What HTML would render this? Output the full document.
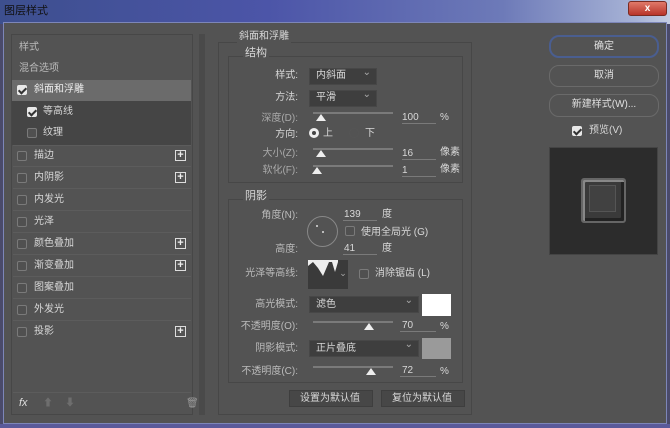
<!DOCTYPE html>
<html><head><meta charset="utf-8"><style>
*{box-sizing:border-box;margin:0;padding:0}
body{width:670px;height:428px;overflow:hidden;background:#4a4a6a;font-family:"Liberation Sans","Noto Sans CJK SC",sans-serif;font-size:10px;color:#d8d8d8;position:relative}
.a{position:absolute}
.t{position:absolute;white-space:nowrap;line-height:12px}
.r{text-align:right}
.cb{position:absolute;width:10px;height:10px;border:1px solid #7a7a7a;border-radius:2px;background:#505050}
.cb.on{background:#e8e8e8;border-color:#e8e8e8}
.cb.on::after{content:"";position:absolute;left:2px;top:0px;width:3px;height:6px;border:solid #333;border-width:0 2px 2px 0;transform:rotate(45deg)}
.plus{position:absolute;width:11px;height:11px;border:1px solid #ddd;color:#eee;font-size:11px;line-height:9px;text-align:center;font-weight:bold}
.sel{position:absolute;height:17px;background:#3e3e3e;border:1px solid #474747}
.sel::after{content:"⌄";position:absolute;right:5px;top:-2px;color:#aaa;font-size:10px}
.sl{position:absolute;height:2px;background:#7a7a7a}
.th{position:absolute;width:0;height:0;border-left:5px solid transparent;border-right:5px solid transparent;border-bottom:7px solid #eee}
.in{position:absolute;height:1px;background:#7a7a7a}
.btn{position:absolute;border:1px solid #6a6a6a;border-radius:10px;text-align:center;line-height:20px;color:#e0e0e0}
.box{position:absolute;border:1px solid #474747}
.row{position:absolute;left:13px;width:178px;height:1px;background:#5c5c5c}
</style></head><body>
<div class="a" style="left:0;top:0;width:670px;height:24px;background:linear-gradient(90deg,#3d4f8e 0%,#4c55a8 40%,#6d7ab8 75%,#a7b3d6 95%,#c5cde2 100%)"></div>
<div class="t" style="left:4px;top:5px;color:#111;font-size:11px">图层样式</div>
<div class="a" style="left:628px;top:1px;width:39px;height:15px;background:linear-gradient(#e07a6a,#b8342a);border:1px solid #7a2b22;border-radius:3px;color:#fff;text-align:center;font-size:10px;line-height:13px;font-weight:bold">x</div>
<div class="a" style="left:3px;top:22px;width:664px;height:402px;background:#535353;border:1px solid #7d86b8"></div>
<div class="a" style="left:0;top:424px;width:670px;height:4px;background:#5a5a9a"></div>

<!-- left panel -->
<div class="a" style="left:11px;top:34px;width:182px;height:381px;border:1px solid #474747;background:#535353"></div>
<div class="a" style="left:12px;top:80px;width:179px;height:21px;background:#6b6b6b"></div>
<div class="a" style="left:12px;top:101px;width:179px;height:44px;background:#454545"></div>
<div class="t" style="left:19px;top:42px;color:#bbb">样式</div>
<div class="t" style="left:19px;top:63px;color:#bbb">混合选项</div>
<div class="cb on" style="left:17px;top:85px"></div><div class="t" style="left:34px;top:84px;color:#eee">斜面和浮雕</div>
<div class="cb on" style="left:27px;top:107px"></div><div class="t" style="left:43px;top:106px">等高线</div>
<div class="cb" style="left:27px;top:128px"></div><div class="t" style="left:43px;top:127px">纹理</div>
<div class="cb" style="left:17px;top:151px"></div><div class="t" style="left:34px;top:150px">描边</div><div class="plus" style="left:175px;top:150px">+</div>
<div class="row" style="top:145px"></div><div class="row" style="top:166px"></div>
<div class="cb" style="left:17px;top:173px"></div><div class="t" style="left:34px;top:172px">内阴影</div><div class="plus" style="left:175px;top:172px">+</div>
<div class="row" style="top:188px"></div>
<div class="cb" style="left:17px;top:195px"></div><div class="t" style="left:34px;top:194px">内发光</div>
<div class="row" style="top:210px"></div>
<div class="cb" style="left:17px;top:217px"></div><div class="t" style="left:34px;top:216px">光泽</div>
<div class="row" style="top:232px"></div>
<div class="cb" style="left:17px;top:239px"></div><div class="t" style="left:34px;top:238px">颜色叠加</div><div class="plus" style="left:175px;top:238px">+</div>
<div class="row" style="top:254px"></div>
<div class="cb" style="left:17px;top:261px"></div><div class="t" style="left:34px;top:260px">渐变叠加</div><div class="plus" style="left:175px;top:260px">+</div>
<div class="row" style="top:276px"></div>
<div class="cb" style="left:17px;top:283px"></div><div class="t" style="left:34px;top:282px">图案叠加</div>
<div class="row" style="top:298px"></div>
<div class="cb" style="left:17px;top:305px"></div><div class="t" style="left:34px;top:304px">外发光</div>
<div class="row" style="top:320px"></div>
<div class="cb" style="left:17px;top:327px"></div><div class="t" style="left:34px;top:326px">投影</div><div class="plus" style="left:175px;top:326px">+</div>
<div class="row" style="top:392px"></div>
<div class="t" style="left:19px;top:397px;font-style:italic;color:#ddd;font-size:11px">fx</div>
<div class="t" style="left:43px;top:398px;color:#6e6e6e">⬆</div><div class="t" style="left:65px;top:398px;color:#6e6e6e">⬇</div>
<div class="t" style="left:186px;top:398px;color:#999">🗑</div>
<div class="a" style="left:199px;top:34px;width:6px;height:381px;background:#4a4a4a"></div>

<!-- main -->
<div class="box" style="left:218px;top:42px;width:254px;height:373px"></div>
<div class="t" style="left:237px;top:31px;background:#535353;padding:0 2px">斜面和浮雕</div>
<div class="box" style="left:228px;top:56px;width:235px;height:127px"></div>
<div class="t" style="left:243px;top:47px;background:#535353;padding:0 2px;font-size:11px">结构</div>
<div class="t r" style="left:230px;width:68px;top:70px">样式:</div><div class="sel" style="left:309px;top:68px;width:68px"></div><div class="t" style="left:316px;top:70px">内斜面</div>
<div class="t r" style="left:230px;width:68px;top:92px">方法:</div><div class="sel" style="left:309px;top:90px;width:68px"></div><div class="t" style="left:316px;top:92px">平滑</div>
<div class="t r" style="left:230px;width:68px;top:113px;color:#aaa">深度(D):</div><div class="sl" style="left:313px;top:112px;width:80px"></div><div class="th" style="left:316px;top:114px"></div>
<div class="t" style="left:402px;top:112px">100</div><div class="in" style="left:402px;top:123px;width:34px"></div><div class="t" style="left:440px;top:112px">%</div>
<div class="t r" style="left:230px;width:68px;top:129px">方向:</div>
<div class="a" style="left:309px;top:128px;width:10px;height:10px;border-radius:50%;background:#eee;border:3px solid #eee"></div><div class="a" style="left:312px;top:131px;width:4px;height:4px;border-radius:50%;background:#444"></div>
<div class="t" style="left:323px;top:128px">上</div>
<div class="a" style="left:349px;top:128px;width:10px;height:10px;border-radius:50%;border:1px solid #555"></div><div class="t" style="left:365px;top:128px">下</div>
<div class="t r" style="left:230px;width:68px;top:148px;color:#aaa">大小(Z):</div><div class="sl" style="left:313px;top:148px;width:80px"></div><div class="th" style="left:316px;top:150px"></div>
<div class="t" style="left:402px;top:148px">16</div><div class="in" style="left:402px;top:159px;width:34px"></div><div class="t" style="left:440px;top:147px">像素</div>
<div class="t r" style="left:230px;width:68px;top:165px;color:#aaa">软化(F):</div><div class="sl" style="left:313px;top:165px;width:80px"></div><div class="th" style="left:312px;top:167px"></div>
<div class="t" style="left:402px;top:165px">1</div><div class="in" style="left:402px;top:176px;width:34px"></div><div class="t" style="left:440px;top:164px">像素</div>

<div class="box" style="left:228px;top:199px;width:235px;height:184px"></div>
<div class="t" style="left:243px;top:190px;background:#535353;padding:0 2px;font-size:11px">阴影</div>
<div class="t r" style="left:230px;width:68px;top:210px;color:#bbb">角度(N):</div>
<div class="a" style="left:307px;top:216px;width:31px;height:31px;border-radius:50%;border:1px solid #888"></div>
<div class="a" style="left:316px;top:225px;width:2px;height:2px;background:#bbb"></div><div class="a" style="left:322px;top:231px;width:2px;height:2px;background:#bbb"></div>
<div class="t" style="left:344px;top:209px">139</div><div class="in" style="left:343px;top:220px;width:34px"></div><div class="t" style="left:382px;top:209px">度</div>
<div class="cb" style="left:345px;top:226px"></div><div class="t" style="left:361px;top:227px">使用全局光 (G)</div>
<div class="t r" style="left:230px;width:68px;top:244px;color:#bbb">高度:</div>
<div class="t" style="left:344px;top:243px">41</div><div class="in" style="left:343px;top:254px;width:34px"></div><div class="t" style="left:382px;top:243px">度</div>
<div class="t r" style="left:230px;width:68px;top:268px;color:#bbb">光泽等高线:</div>
<div class="a" style="left:308px;top:260px;width:30px;height:29px;background:#eee;overflow:hidden"><svg width="30" height="29"><path d="M0 29 L0 6 L5 2 L10 8 L15 16 L21 2 L24 2 L27 12 L30 2 L30 29Z" fill="#3a3a3a"/></svg></div>
<div class="a" style="left:338px;top:260px;width:10px;height:29px;background:#3a3a3a;color:#aaa;font-size:9px;text-align:center;line-height:26px">⌄</div>
<div class="cb" style="left:359px;top:269px"></div><div class="t" style="left:375px;top:268px">消除锯齿 (L)</div>
<div class="t r" style="left:230px;width:68px;top:299px;color:#bbb">高光模式:</div><div class="sel" style="left:309px;top:296px;width:110px"></div><div class="t" style="left:316px;top:299px">滤色</div>
<div class="a" style="left:422px;top:294px;width:29px;height:22px;background:#fff"></div>
<div class="t r" style="left:230px;width:68px;top:321px;color:#bbb">不透明度(O):</div><div class="sl" style="left:313px;top:321px;width:80px"></div><div class="th" style="left:364px;top:323px"></div>
<div class="t" style="left:402px;top:320px">70</div><div class="in" style="left:400px;top:331px;width:36px"></div><div class="t" style="left:440px;top:321px">%</div>
<div class="t r" style="left:230px;width:68px;top:343px;color:#bbb">阴影模式:</div><div class="sel" style="left:309px;top:340px;width:110px"></div><div class="t" style="left:316px;top:343px">正片叠底</div>
<div class="a" style="left:422px;top:338px;width:29px;height:21px;background:#9a9a9a"></div>
<div class="t r" style="left:230px;width:68px;top:366px;color:#bbb">不透明度(C):</div><div class="sl" style="left:313px;top:366px;width:80px"></div><div class="th" style="left:366px;top:368px"></div>
<div class="t" style="left:402px;top:365px">72</div><div class="in" style="left:400px;top:376px;width:36px"></div><div class="t" style="left:440px;top:366px">%</div>
<div class="a" style="left:289px;top:390px;width:84px;height:17px;background:#474747;border:1px solid #3e3e3e"></div><div class="t" style="left:300px;top:393px">设置为默认值</div>
<div class="a" style="left:381px;top:390px;width:84px;height:17px;background:#474747;border:1px solid #3e3e3e"></div><div class="t" style="left:392px;top:393px">复位为默认值</div>

<!-- right -->
<div class="btn" style="left:549px;top:35px;width:110px;height:23px;border-color:#4a5e90;border-width:2px">确定</div>
<div class="btn" style="left:549px;top:65px;width:110px;height:22px">取消</div>
<div class="btn" style="left:549px;top:94px;width:110px;height:23px">新建样式(W)...</div>
<div class="cb on" style="left:572px;top:126px"></div><div class="t" style="left:589px;top:125px">预览(V)</div>
<div class="a" style="left:549px;top:147px;width:109px;height:108px;background:#2c2c2c;border:1px solid #444"></div>
<div class="a" style="left:581px;top:178px;width:45px;height:45px;background:#3a3a3a;border:2px solid #666;border-radius:3px;box-shadow:inset 2px 2px 0 #888,inset -3px -3px 0 #222"></div>
<div class="a" style="left:589px;top:185px;width:27px;height:27px;background:#414141;border:1px solid #555"></div>
</body></html>
